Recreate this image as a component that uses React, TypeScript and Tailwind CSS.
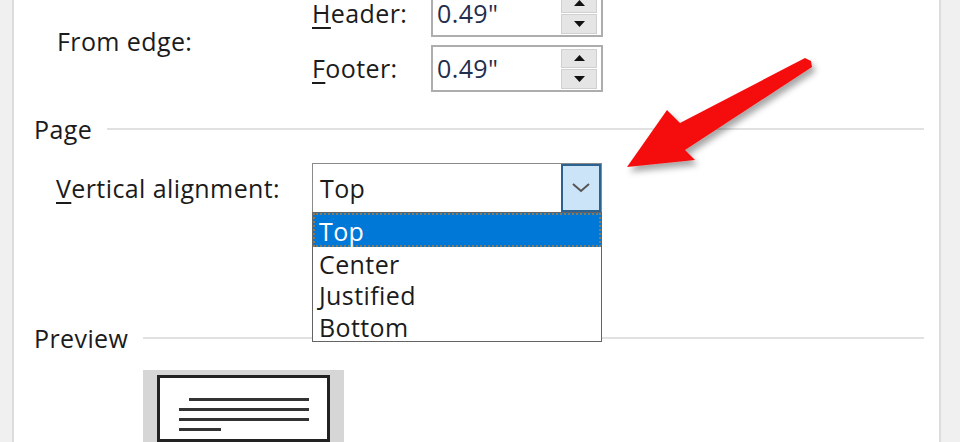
const font = "font-['Open_Sans','Noto_Sans',sans-serif] font-medium tracking-[0.4px]";

// Spin box with the up/down buttons on its right edge
const SpinBox = ({ value }: { value: string }) => (
	<div className="flex h-[47px] w-[172px] items-center border-2 border-[#adadad] bg-white pl-[4px] pr-[4px]">
		<span className="flex-1 text-[25px] leading-none text-[#1f2f4d]">{value}</span>
		<div className="flex h-[40px] w-[36px] flex-col gap-[1px]">
			<div className="flex flex-1 items-center justify-center border border-[#d0d0d0] bg-[#e5e5e5]">
				<svg width="11" height="6" viewBox="0 0 11 6">
					<polygon points="0,6 11,6 5.5,0" fill="#111" />
				</svg>
			</div>
			<div className="flex flex-1 items-center justify-center border border-[#d0d0d0] bg-[#e5e5e5]">
				<svg width="11" height="6" viewBox="0 0 11 6">
					<polygon points="0,0 11,0 5.5,6" fill="#111" />
				</svg>
			</div>
		</div>
	</div>
);

const GroupHeading = ({ title }: { title: string }) => (
	<div className="flex h-[36px] items-center pl-[20px] pr-[15px]">
		<span className="text-[25px] leading-none">{title}</span>
		<div className="ml-[15px] h-[2px] flex-1 bg-[#e1e1e1]" />
	</div>
);

const options = ["Top", "Center", "Justified", "Bottom"];

export default function App() {
	return (
		<div
			className={`relative flex h-[442px] w-[960px] overflow-hidden bg-[#f0f0f0] text-[#1b1b1b] ${font}`}
		>
			<div className="w-[14px] shrink-0 border-r-2 border-[#dcdcdc]" />

			<div className="flex w-[925px] shrink-0 flex-col bg-white">
				{/* margins: from edge */}
				<div className="-mt-[10px] grid grid-cols-[255px_119px_172px] gap-y-[8px] pl-[43px]">
					<span className="row-span-2 self-center text-[25px] leading-none">From edge:</span>
					<span className="self-center text-[25px] leading-none">
						<span className="underline underline-offset-[4px]">H</span>eader:
					</span>
					<SpinBox value={'0.49"'} />
					<span className="self-center text-[25px] leading-none">
						<span className="underline underline-offset-[4px]">F</span>ooter:
					</span>
					<SpinBox value={'0.49"'} />
				</div>

				<div className="mt-[19px]">
					<GroupHeading title="Page" />
				</div>

				<div className="mt-[16px] flex items-center pl-[42px]">
					<span className="w-[256px] text-[25px] leading-none">
						<span className="underline underline-offset-[4px]">V</span>ertical alignment:
					</span>
					<div className="relative flex h-[50px] w-[290px] items-center border border-[#8a8a8a] bg-white">
						<span className="flex-1 pl-[7px] text-[25px] leading-none">Top</span>
						<div className="flex h-full w-[40px] items-center justify-center border-2 border-[#2c628f] bg-[#cce4f7]">
							<svg width="18" height="10" viewBox="0 0 18 10">
								<polyline points="1,1 9,8 17,1" fill="none" stroke="#555" strokeWidth="2" />
							</svg>
						</div>

						{/* open list */}
						<div className="absolute left-[-1px] top-full z-10 flex h-[130px] w-[290px] flex-col border border-[#646464] bg-white">
							{options.map((opt, i) => (
								<div
									key={opt}
									className={
										i === 0
											? "flex h-[34px] items-center border-2 border-dotted border-[#8a7a5a] bg-[#0078d7] pl-[4px] pt-[4px] text-[25px] leading-none text-white"
											: "flex h-[31.5px] items-center pl-[6px] pt-[4px] text-[25px] leading-none"
									}
								>
									{opt}
								</div>
							))}
						</div>
					</div>
				</div>

				<div className="mt-[107px]">
					<GroupHeading title="Preview" />
				</div>

				<div className="ml-[129px] mt-[14px] h-[120px] w-[201px] bg-[#d6d6d6] px-[14px] pt-[5px]">
					<div className="h-full border-[3px] border-[#222] bg-white">
						<div className="flex flex-col gap-[7px] pl-[19px] pt-[20px]">
							<div className="ml-[10px] h-[3px] w-[120px] bg-[#333]" />
							<div className="h-[3px] w-[130px] bg-[#333]" />
							<div className="h-[3px] w-[130px] bg-[#333]" />
							<div className="h-[3px] w-[42px] bg-[#333]" />
						</div>
					</div>
				</div>
			</div>

			<div className="flex-1 border-l-2 border-[#dcdcdc]" />

			{/* callout arrow */}
			<svg className="pointer-events-none absolute left-0 top-0" width="960" height="442">
				<defs>
					<filter id="arrowShadow" x="-20%" y="-20%" width="140%" height="140%">
						<feDropShadow dx="3" dy="5" stdDeviation="3" floodColor="#000" floodOpacity="0.35" />
					</filter>
				</defs>
				<polygon
					points="627,167 667,110 680,123 805,58 811,61 812,67 685,150 695,160"
					fill="#f50d0d"
					filter="url(#arrowShadow)"
				/>
			</svg>
		</div>
	);
}
